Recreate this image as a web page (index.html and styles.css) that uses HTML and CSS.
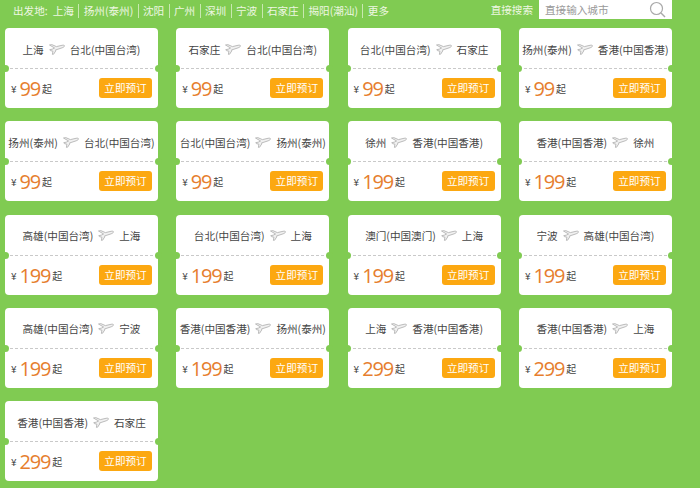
FILE: index.html
```html
<!DOCTYPE html>
<html lang="zh-CN">
<head>
    <meta charset="UTF-8">
    <title>特价机票</title>
    <link rel="stylesheet" href="styles.css">
</head>
<body>

<svg class="defs" width="0" height="0">
    <symbol id="plane" viewBox="0 0 16 11">
        <path d="M0.5 1 L2.8 0.6 L7.4 2.6 L13 1.3 C14.8 0.9 15.9 1.4 15.5 2.2 C15.1 3 13.6 3.7 12 4.2 L6.4 6 L6.8 6.8 L4.6 10.2 L3.4 10.4 L3.9 7.2 L1.4 6.6 L0.8 5.6 L3.2 5.2 L5.6 4 Z" fill="#f1f1f1" stroke="#b4b4b4" stroke-width=".9" stroke-linejoin="round"/>
    </symbol>
</svg>

<!-- 顶部出发地 -->
<div class="top">
    <div class="cities">
        <span class="label">出发地:</span>
        <a>上海</a>
        <a>扬州(泰州)</a>
        <a>沈阳</a>
        <a>广州</a>
        <a>深圳</a>
        <a>宁波</a>
        <a>石家庄</a>
        <a>揭阳(潮汕)</a>
        <a>更多</a>
    </div>
    <div class="search">
        <span class="search-label">直接搜索</span>
        <div class="search-box">
            <span>直接输入城市</span>
            <svg width="17" height="17" viewBox="0 0 17 17">
                <circle cx="7.5" cy="7.5" r="6" fill="none" stroke="#a9a9a9" stroke-width="1.2"/>
                <path d="M12 12 L16 16" stroke="#a9a9a9" stroke-width="1.4"/>
            </svg>
        </div>
    </div>
</div>

<!-- 机票列表 -->
<div class="list" id="list"></div>

<script>
    var tickets = [
        ['上海', '台北(中国台湾)', 99],
        ['石家庄', '台北(中国台湾)', 99],
        ['台北(中国台湾)', '石家庄', 99],
        ['扬州(泰州)', '香港(中国香港)', 99],
        ['扬州(泰州)', '台北(中国台湾)', 99],
        ['台北(中国台湾)', '扬州(泰州)', 99],
        ['徐州', '香港(中国香港)', 199],
        ['香港(中国香港)', '徐州', 199],
        ['高雄(中国台湾)', '上海', 199],
        ['台北(中国台湾)', '上海', 199],
        ['澳门(中国澳门)', '上海', 199],
        ['宁波', '高雄(中国台湾)', 199],
        ['高雄(中国台湾)', '宁波', 199],
        ['香港(中国香港)', '扬州(泰州)', 199],
        ['上海', '香港(中国香港)', 299],
        ['香港(中国香港)', '上海', 299],
        ['香港(中国香港)', '石家庄', 299]
    ];
    var html = '';
    tickets.forEach(function (t) {
        html += '<div class="card">' +
            '<div class="route"><span>' + t[0] + '</span>' +
            '<svg class="plane"><use href="#plane"></use></svg>' +
            '<span>' + t[1] + '</span></div>' +
            '<div class="foot"><span class="yen">¥</span><span class="price">' + t[2] + '</span>' +
            '<span class="qi">起</span><span class="btn">立即预订</span></div>' +
            '</div>';
    });
    document.getElementById('list').innerHTML = html;
</script>
</body>
</html>
```

FILE: styles.css
```css
* {
    box-sizing: border-box;
}
body {
    margin: 0;
    background-color: #80cb52;
    font-family: "Noto Sans CJK SC", "Liberation Sans", sans-serif;
    font-size: 10.6px;
    color: #444;
}
.defs {
    position: absolute;
}

.top {
    display: flex;
    justify-content: space-between;
    height: 28px;
    padding: 0 28px 0 13px;
    color: #eef7e2;
}
.cities {
    display: flex;
    align-items: center;
    height: 21px;
}
.label {
    margin-right: 5px;
}
.cities a {
    padding: 0 4.4px;
    border-left: 1px solid #c8e8b0;
    line-height: 14px;
}
.cities a:first-of-type {
    padding-left: 0;
    border-left: none;
}
.search {
    display: flex;
    height: 19px;
}
.search-label {
    margin-right: 6px;
    line-height: 20px;
}
.search-box {
    display: flex;
    align-items: center;
    justify-content: space-between;
    width: 133px;
    padding: 0 6px;
    background-color: #fff;
    color: #999;
}

.list {
    display: grid;
    grid-template-columns: repeat(4, 153px);
    column-gap: 18.3px;
    row-gap: 13.3px;
    padding-left: 5px;
}
.card {
    position: relative;
    height: 80px;
    border-radius: 4px;
    background-color: #fff;
}
.card::before,
.card::after {
    content: '';
    position: absolute;
    top: 37px;
    width: 7px;
    height: 7px;
    border-radius: 50%;
    background-color: #80cb52;
}
.card::before {
    left: -3.5px;
}
.card::after {
    right: -3.5px;
}
.route {
    display: flex;
    align-items: center;
    justify-content: center;
    height: 41px;
    padding-top: 2px;
    border-bottom: 1px dashed #c9c9c9;
    white-space: nowrap;
}
.plane {
    width: 16px;
    height: 11px;
    margin: 0 5px;
}
.foot {
    display: flex;
    align-items: center;
    height: 39px;
    padding: 0 6px;
}
.yen {
    font-size: 10px;
    margin-right: 3px;
}
.price {
    font-family: "Open Sans", sans-serif;
    font-size: 20px;
    letter-spacing: -1.2px;
    color: #e67e2e;
}
.qi {
    font-size: 10px;
    margin-left: 2px;
}
.btn {
    width: 53px;
    height: 20px;
    margin-left: auto;
    margin-top: -1px;
    border-radius: 3px;
    background-color: #fca811;
    color: #fff;
    text-align: center;
    line-height: 20px;
}
```
